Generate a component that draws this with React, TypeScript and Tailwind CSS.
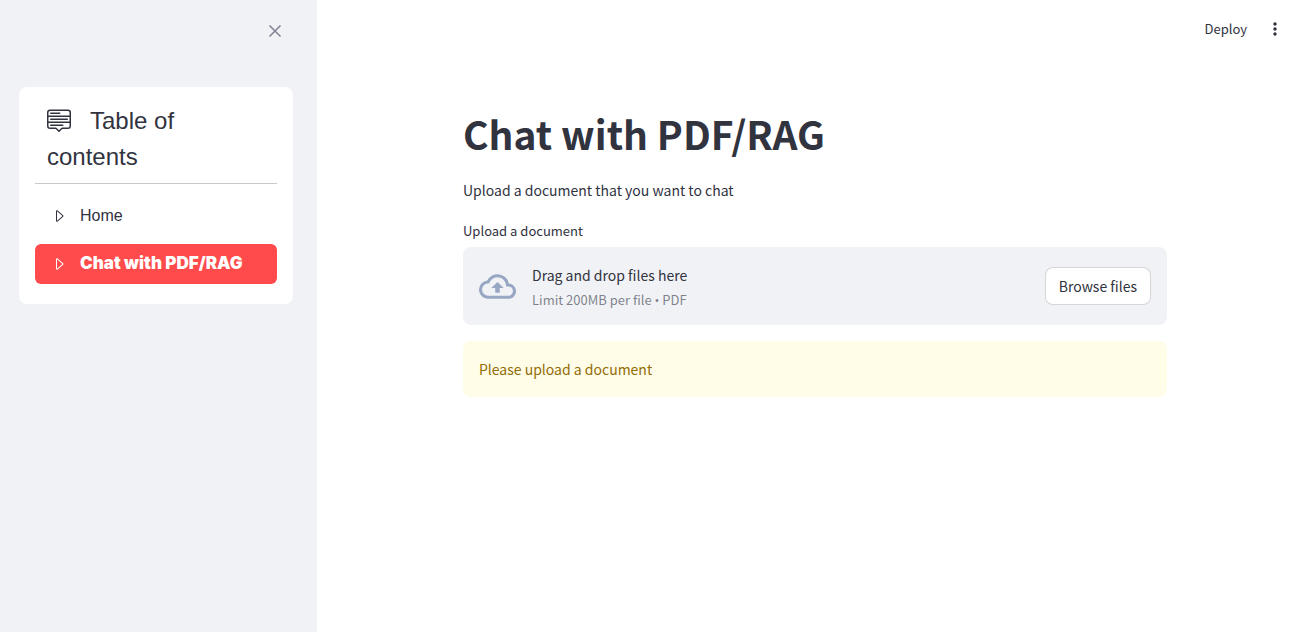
import { BsCaretRight, BsMenuUp } from "react-icons/bs";
import { MdMoreVert, MdOutlineCloudUpload } from "react-icons/md";

function Sidebar() {
  return (
    <aside className="flex w-[317px] shrink-0 flex-col bg-[#f0f2f6] pl-[19px] pr-6">
      <div className="flex h-[87px] justify-end pr-2 pt-[21px]">
        <button type="button" aria-label="Close sidebar" className="flex size-5 items-center justify-center text-[#808495]">
          <svg viewBox="0 0 20 20" className="size-5" fill="none" stroke="currentColor" strokeWidth="1.6" aria-hidden="true">
            <path d="M4.5 4.5l11 11M15.5 4.5l-11 11" />
          </svg>
        </button>
      </div>
      <nav className="rounded-lg bg-white px-4 pb-5 pt-4 font-['Liberation_Sans',Arial,sans-serif]">
        <h2 className="px-3 pb-2 text-2xl leading-9">
          <BsMenuUp className="mr-[19px] inline-block size-6 align-[-3px]" aria-hidden="true" />
          Table of contents
        </h2>
        <hr className="mb-3 border-[#c8c8ca]" />
        <ul className="flex flex-col gap-2 text-base">
          <li>
            <a href="#home" className="flex h-10 items-center gap-[13px] rounded-md px-4">
              <BsCaretRight className="size-4" aria-hidden="true" />
              Home
            </a>
          </li>
          <li>
            <a
              href="#chat"
              aria-current="page"
              className="flex h-10 items-center gap-[13px] whitespace-nowrap rounded-md bg-[#ff4b4b] px-4 font-['Inter',sans-serif] text-[17px] font-black text-white"
            >
              <BsCaretRight className="size-4" aria-hidden="true" />
              Chat with PDF/RAG
            </a>
          </li>
        </ul>
      </nav>
    </aside>
  );
}

function Uploader() {
  return (
    <section>
      <label htmlFor="upload" className="block text-[13px] leading-5">
        Upload a document
      </label>
      <div className="mt-[6px] flex items-center rounded-lg bg-[#f0f2f6] p-4">
        <MdOutlineCloudUpload className="mr-4 size-[37px] shrink-0 text-[#97a6c3]" aria-hidden="true" />
        <div className="flex grow flex-col">
          <span className="text-[14px] leading-6">Drag and drop files here</span>
          <span className="pt-1 text-[13px] leading-[18px] text-[#31333f]/60">
            Limit 200MB per file <span className="font-['Open_Sans',sans-serif]">•</span> PDF
          </span>
        </div>
        <button
          id="upload"
          type="button"
          className="h-[38px] shrink-0 rounded-lg border border-[#31333f]/20 bg-white px-[13px] text-[14px] leading-6"
        >
          Browse files
        </button>
      </div>
    </section>
  );
}

export default function App() {
  return (
    <div className="flex min-h-screen bg-white font-['Noto_Sans_CJK_SC',sans-serif] text-[#31333f]">
      <Sidebar />
      <div className="flex min-w-0 grow flex-col">
        <header className="flex h-[58px] items-center justify-end gap-[18px] pr-7">
          <button type="button" className="text-[13px] leading-5">
            Deploy
          </button>
          <button type="button" aria-label="Main menu">
            <MdMoreVert className="size-5" aria-hidden="true" />
          </button>
        </header>
        <main className="mx-auto w-full max-w-[736px] px-4 pt-12">
          <h1 className="text-[39px] font-bold leading-[54px]">Chat with PDF/RAG</h1>
          <p className="pt-[18px] text-[14px] leading-6">Upload a document that you want to chat</p>
          <div className="pt-[19px]">
            <Uploader />
          </div>
          <div role="alert" className="mt-4 rounded-lg bg-[#fffce7] p-4 text-[14px] leading-6 text-[#926c05]">
            Please upload a document
          </div>
        </main>
      </div>
    </div>
  );
}
